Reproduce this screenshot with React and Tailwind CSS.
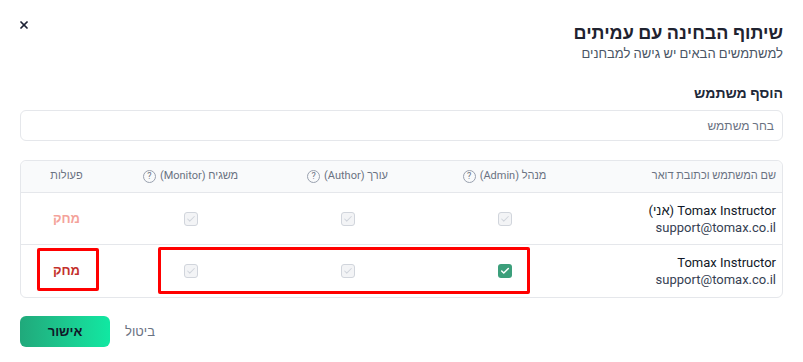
import React from "react";
import { X, Check } from "lucide-react";

const rows = [
    { name: "Tomax Instructor (אני)", email: "support@tomax.co.il", admin: false, self: true },
    { name: "Tomax Instructor", email: "support@tomax.co.il", admin: true, self: false },
];

const cols = "grid grid-cols-[1fr_157px_157px_157px_91px]";

const Help = () => (
    <span className="inline-flex items-center justify-center w-[13px] h-[13px] rounded-full border border-gray-400 text-gray-500 text-[9px] leading-none">
        ?
    </span>
);

const Box = ({ checked }) =>
    checked ? (
        <span className="w-[14px] h-[14px] rounded-[3px] bg-[#3c9f7b] flex items-center justify-center">
            <Check size={10} strokeWidth={3.5} className="text-white" />
        </span>
    ) : (
        <span className="w-[14px] h-[14px] rounded-[3px] border border-gray-300 bg-gray-100 flex items-center justify-center">
            <Check size={10} strokeWidth={2.5} className="text-gray-300" />
        </span>
    );

const App = () => {
    return (
        <div
            dir="rtl"
            className="relative w-[803px] h-[362px] bg-white px-5 pt-[21px] text-gray-900"
            style={{ fontFamily: "Roboto, 'Liberation Sans', sans-serif" }}
        >
            <button className="absolute left-[18px] top-[19px] text-[#1e2235]">
                <X size={12} strokeWidth={3.5} />
            </button>

            <h2 className="text-[18px] font-bold leading-6 text-[#1f2330]">שיתוף הבחינה עם עמיתים</h2>
            <p className="text-[13px] leading-[18px] text-gray-600">למשתמשים הבאים יש גישה למבחנים</p>

            <p className="mt-[20px] text-sm leading-5 font-bold text-gray-800">הוסף משתמש</p>
            <div className="mt-[7px] h-[31px] rounded-md border border-gray-200 flex items-center px-2 text-[12px] text-gray-500">
                בחר משתמש
            </div>

            <div className="mt-[19px] rounded-md border border-gray-200">
                <div className={`${cols} h-[32px] items-center bg-gray-50 border-b border-gray-200 text-[11px] text-gray-500 rounded-t-md`}>
                    <div className="pr-[6px]">שם המשתמש וכתובת דואר</div>
                    <div className="flex items-center justify-center gap-1">
                        מנהל (Admin) <Help />
                    </div>
                    <div className="flex items-center justify-center gap-1">
                        עורך (Author) <Help />
                    </div>
                    <div className="flex items-center justify-center gap-1">
                        משגיח (Monitor) <Help />
                    </div>
                    <div className="text-center">פעולות</div>
                </div>

                {rows.map((r, i) => (
                    <div
                        key={i}
                        className={`${cols} relative h-[52px] items-center text-[13px] ${i === 0 ? "border-b border-gray-200" : ""}`}
                    >
                        <div className="pr-[6px] leading-[17px]">
                            <div className="text-gray-900">{r.name}</div>
                            <div className="text-gray-700">{r.email}</div>
                        </div>
                        <div className="flex justify-center">
                            <Box checked={r.admin} />
                        </div>
                        <div className="flex justify-center">
                            <Box />
                        </div>
                        <div className="flex justify-center">
                            <Box />
                        </div>
                        <div className={`text-center font-bold ${r.self ? "text-[#f4a29a]" : "text-[#c4302b]"}`}>
                            מחק
                        </div>
                        {i === 1 && (
                            <>
                                <span className="absolute left-[16px] top-[3px] w-[62px] h-[43px] border-[3px] border-[#ff0000] rounded-[2px]" />
                                <span className="absolute left-[137px] top-[2px] w-[372px] h-[47px] border-[3px] border-[#ff0000] rounded-[2px]" />
                            </>
                        )}
                    </div>
                ))}
            </div>

            <div className="mt-[18px] flex items-center justify-end gap-[15px]">
                <button className="text-[13px] text-gray-500">ביטול</button>
                <button className="w-[90px] h-[31px] rounded-md bg-gradient-to-r from-[#20a97b] to-[#10e8a2] text-[13px] font-bold text-gray-900">
                    אישור
                </button>
            </div>
        </div>
    );
};

export default App;
